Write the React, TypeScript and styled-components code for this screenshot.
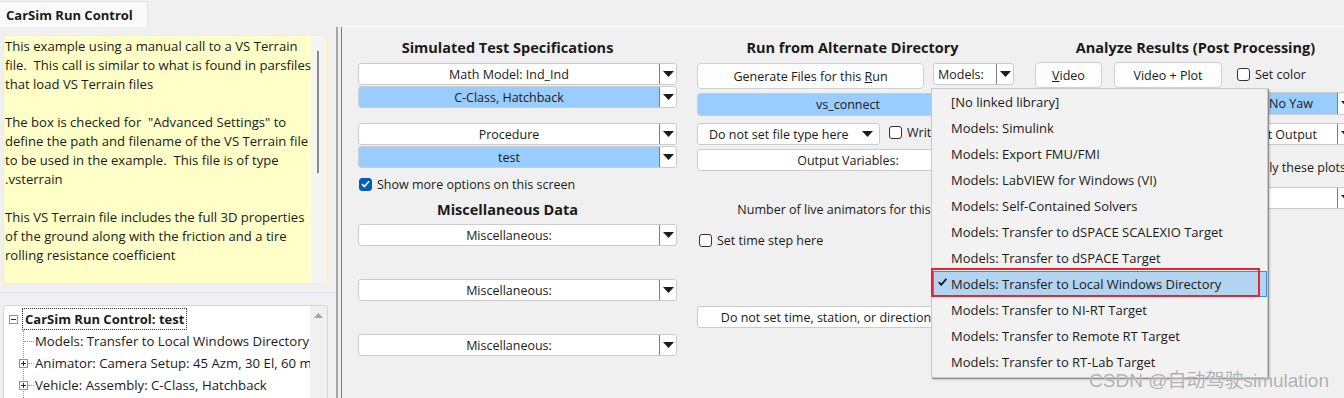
import React from 'react'
import styled, { createGlobalStyle } from 'styled-components'

const GlobalStyle = createGlobalStyle`
  html, body {
    margin: 0;
    padding: 0;
  }
  body {
    font-family: "Open Sans", "Noto Sans", sans-serif;
    background: #f0f0f0;
    color: #1a1a1a;
  }
  * {
    box-sizing: border-box;
  }
`

const Window = styled.div`
  position: relative;
  width: 1344px;
  height: 398px;
  overflow: hidden;
  display: flex;
  flex-direction: column;
  background: #f0f0f0;
  font-size: 12.5px;
`

const TabBar = styled.div`
  height: 27px;
  display: flex;
  align-items: flex-end;
  flex-shrink: 0;
`

const Tab = styled.div`
  width: 148px;
  height: 26px;
  padding-left: 6px;
  background: #f9f9f9;
  border: 1px solid #e2e2e2;
  border-left: none;
  border-bottom: none;
  font-weight: 700;
  font-size: 13px;
  line-height: 26px;
`

const Body = styled.div`
  flex: 1;
  display: flex;
  min-height: 0;
`

const LeftPane = styled.div`
  width: 336px;
  flex-shrink: 0;
  display: flex;
  flex-direction: column;
  padding: 8px 0 0 3px;
  min-height: 0;
`

const NotesBox = styled.div`
  width: 324px;
  height: 249px;
  flex-shrink: 0;
  display: flex;
  background: #ffffc8;
  border: 1px solid #f4efb6;
`

const NotesText = styled.div`
  flex: 1;
  padding: 1px 0 0 1px;
  white-space: pre;
  overflow: hidden;
  line-height: 19px;
  font-size: 13.1px;
`

const NotesScroll = styled.div`
  width: 15px;
  flex-shrink: 0;
  padding: 15px 0 0 6px;
  background: #f4f4f4;
`

const ScrollThumb = styled.div`
  width: 2px;
  height: 122px;
  background: #8a8a8a;
`

const PaneRule = styled.div`
  height: 1px;
  flex-shrink: 0;
  margin: 8px 0 0 -3px;
  background: #d5e5f4;
`

const TreeBox = styled.div`
  flex: 1;
  min-height: 0;
  width: 325px;
  margin-top: 12px;
  display: flex;
  background: #fff;
  border: 1px solid #c3dbf1;
  border-bottom: none;
  border-radius: 3px 3px 0 0;
  overflow: hidden;
`

const TreeContent = styled.div`
  flex: 1;
  min-width: 0;
  padding-top: 2px;
  overflow: hidden;
  font-size: 13.2px;
`

const TreeRow = styled.div<{ $root?: boolean }>`
  height: 22px;
  display: flex;
  align-items: center;
  white-space: nowrap;
  padding-left: ${(p) => (p.$root ? 5 : 0)}px;
`

const FocusLabel = styled.span`
  flex-shrink: 0;
  margin-left: 4px;
  padding: 0 2px;
  height: 22px;
  line-height: 20px;
  border: 1px dotted #333;
  font-weight: 700;
  font-size: 13px;
`

const TreeChildren = styled.div`
  margin-left: 19px;
  border-left: 1px dotted #9a9a9a;
  padding-bottom: 40px;
`

const Connector = styled.span<{ $w: number }>`
  flex-shrink: 0;
  width: ${(p) => p.$w}px;
  border-top: 1px dotted #9a9a9a;
`

const ExpanderSvg = styled.svg<{ $shift?: number }>`
  flex-shrink: 0;
  margin-left: ${(p) => p.$shift ?? 0}px;
`

const TreeText = styled.span`
  flex-shrink: 0;
  padding-left: 1px;
`

const TreeScroll = styled.div`
  width: 17px;
  flex-shrink: 0;
  display: flex;
  justify-content: center;
  align-items: flex-start;
  padding-top: 7px;
  background: #f0f0f0;
`

const Splitter = styled.div`
  width: 6px;
  flex-shrink: 0;
  border-left: 2px solid #a8a8a8;
  border-right: 1px solid #7c7c7c;
  background: #f0f0f0;
`

const Main = styled.div`
  flex: 1;
  min-width: 0;
  display: grid;
  grid-template-columns: repeat(3, 319px);
  column-gap: 20px;
  align-items: start;
  padding: 12px 0 0 16px;
  border-top: 1px solid #fbfbfb;
  margin-top: -1px;
`

const Column = styled.div`
  display: flex;
  flex-direction: column;
`

const Heading = styled.div<{ $top?: number; $shift?: number }>`
  height: 18px;
  margin-top: ${(p) => p.$top ?? 0}px;
  margin-left: ${(p) => (p.$shift ?? 0) * 2}px;
  line-height: 18px;
  text-align: center;
  font-weight: 700;
  font-size: 14.5px;
  white-space: nowrap;
`

const Combo = styled.div<{ $top?: number; $h?: number; $w?: number }>`
  display: flex;
  flex-shrink: 0;
  width: ${(p) => (p.$w ? `${p.$w}px` : '100%')};
  height: ${(p) => p.$h ?? 22}px;
  margin-top: ${(p) => p.$top ?? 0}px;
  background: #fff;
  border: 1px solid #cccccc;
  border-radius: 3px;
  overflow: hidden;
`

const ComboText = styled.div<{ $selected?: boolean; $left?: boolean }>`
  flex: 1;
  min-width: 0;
  display: flex;
  align-items: center;
  justify-content: ${(p) => (p.$left ? 'flex-start' : 'center')};
  padding-left: ${(p) => (p.$left ? 4 : 0)}px;
  white-space: nowrap;
  overflow: hidden;
  background: ${(p) => (p.$selected ? '#99ccff' : 'transparent')};
`

const ComboArrow = styled.div`
  width: 17px;
  flex-shrink: 0;
  display: flex;
  align-items: center;
  justify-content: center;
  border-left: 1px solid #7e7e7e;
`

const Select = styled.div<{ $w: number }>`
  width: ${(p) => p.$w}px;
  height: 22px;
  flex-shrink: 0;
  display: flex;
  align-items: center;
  justify-content: space-between;
  padding: 0 6px 0 11px;
  background: #fff;
  border: 1px solid #cccccc;
  border-radius: 3px;
  white-space: nowrap;
`

const Button = styled.div<{ $w?: number; $h?: number }>`
  width: ${(p) => (p.$w ? `${p.$w}px` : 'auto')};
  height: ${(p) => p.$h ?? 26}px;
  flex-shrink: 0;
  display: flex;
  align-items: center;
  justify-content: center;
  background: #fdfdfd;
  border: 1px solid #d0d0d0;
  border-radius: 4px;
  white-space: nowrap;
`

const Row = styled.div<{ $top?: number; $gap?: number; $indent?: number }>`
  display: flex;
  align-items: flex-start;
  gap: ${(p) => p.$gap ?? 0}px;
  margin-top: ${(p) => p.$top ?? 0}px;
  margin-left: ${(p) => p.$indent ?? 0}px;
  white-space: nowrap;
`

const CheckRow = styled.label<{ $top?: number; $indent?: number }>`
  height: 18px;
  flex-shrink: 0;
  display: flex;
  align-items: center;
  gap: 5px;
  margin-top: ${(p) => p.$top ?? 0}px;
  margin-left: ${(p) => p.$indent ?? 0}px;
  white-space: nowrap;
`

const Box = styled.span<{ $checked?: boolean }>`
  width: 13px;
  height: 13px;
  flex-shrink: 0;
  display: flex;
  align-items: center;
  justify-content: center;
  border-radius: 3px;
  border: 1px solid ${(p) => (p.$checked ? '#005fb8' : '#333')};
  background: ${(p) => (p.$checked ? '#005fb8' : '#fff')};
`

const Caption = styled.div<{ $top?: number }>`
  height: 18px;
  margin-top: ${(p) => p.$top ?? 0}px;
  display: flex;
  align-items: center;
  justify-content: center;
  white-space: nowrap;
`

const SpinBox = styled.span`
  width: 14px;
  height: 18px;
  margin-left: 4px;
  background: #fff;
  border: 1px solid #cccccc;
`

const Anchor = styled.div`
  position: relative;
`

const Menu = styled.div`
  position: absolute;
  top: 25px;
  left: -2px;
  z-index: 5;
  width: 337px;
  height: 290px;
  padding-bottom: 2px;
  background: #f2f2f2;
  border: 1px solid #c9c9c9;
  box-shadow: 1px 1px 0 #8c8c8c, 2px 2px 2px rgba(0, 0, 0, 0.18);
  font-size: 13px;
`

const MenuItem = styled.div<{ $selected?: boolean }>`
  position: relative;
  height: 26px;
  margin-left: 1px;
  display: flex;
  align-items: center;
  white-space: nowrap;
  border: 1px solid ${(p) => (p.$selected ? '#3b8de0' : 'transparent')};
  background: ${(p) => (p.$selected ? '#b3d4f1' : 'transparent')};
`

const CheckSlot = styled.span`
  width: 17px;
  height: 100%;
  display: flex;
  justify-content: center;
  padding-top: 6px;
`

const Highlight = styled.div`
  position: absolute;
  left: -3px;
  top: -4px;
  width: 329px;
  height: 29px;
  border: 2px solid #e5262b;
`

const Watermark = styled.div`
  position: absolute;
  right: 15px;
  bottom: 6px;
  font-family: "Liberation Sans", "Noto Sans CJK SC", sans-serif;
  font-size: 19px;
  color: rgba(165, 165, 165, 0.9);
  text-shadow: 0 0 1px #ffffff;
  white-space: nowrap;
  pointer-events: none;
  z-index: 10;
`

const notes = `This example using a manual call to a VS Terrain
file.  This call is similar to what is found in parsfiles
that load VS Terrain files

The box is checked for  "Advanced Settings" to
define the path and filename of the VS Terrain file
to be used in the example.  This file is of type
.vsterrain

This VS Terrain file includes the full 3D properties
of the ground along with the friction and a tire
rolling resistance coefficient`

const menuItems = [
  '[No linked library]',
  'Models: Simulink',
  'Models: Export FMU/FMI',
  'Models: LabVIEW for Windows (VI)',
  'Models: Self-Contained Solvers',
  'Models: Transfer to dSPACE SCALEXIO Target',
  'Models: Transfer to dSPACE Target',
  'Models: Transfer to Local Windows Directory',
  'Models: Transfer to NI-RT Target',
  'Models: Transfer to Remote RT Target',
  'Models: Transfer to RT-Lab Target',
]

const treeItems = [
  { label: 'Models: Transfer to Local Windows Directory: vs_connect', expandable: false },
  { label: 'Animator: Camera Setup: 45 Azm, 30 El, 60 m, No Yaw', expandable: true },
  { label: 'Vehicle: Assembly: C-Class, Hatchback', expandable: true },
]

function Expander({ open, shift }: { open?: boolean; shift?: number }) {
  return (
    <ExpanderSvg width="9" height="9" viewBox="0 0 9 9" $shift={shift}>
      <rect x="0.5" y="0.5" width="8" height="8" fill="#fff" stroke="#919191" />
      <path d="M2 4.5H7" stroke="#2a2a2a" />
      {!open && <path d="M4.5 2V7" stroke="#2a2a2a" />}
    </ExpanderSvg>
  )
}

function Arrow() {
  return (
    <svg width="11" height="6" viewBox="0 0 11 6">
      <path d="M0 0H11L5.5 6Z" fill="#1c1c1c" />
    </svg>
  )
}

function Check({ checked, children, top, indent }: { checked?: boolean; children?: React.ReactNode; top?: number; indent?: number }) {
  return (
    <CheckRow $top={top} $indent={indent}>
      <Box $checked={checked}>
        {checked && (
          <svg width="9" height="8" viewBox="0 0 9 8">
            <path d="M1 4.2L3.4 6.5L8 1.3" fill="none" stroke="#fff" strokeWidth="1.6" />
          </svg>
        )}
      </Box>
      {children}
    </CheckRow>
  )
}

function DropDown({ text, selected, top, h, w, left }: { text: React.ReactNode; selected?: boolean; top?: number; h?: number; w?: number; left?: boolean }) {
  return (
    <Combo $top={top} $h={h} $w={w}>
      <ComboText $selected={selected} $left={left}>{text}</ComboText>
      <ComboArrow><Arrow /></ComboArrow>
    </Combo>
  )
}

export default function App() {
  return (
    <>
      <GlobalStyle />
      <Window>
        <TabBar>
          <Tab>CarSim Run Control</Tab>
        </TabBar>
        <Body>
          <LeftPane>
            <NotesBox>
              <NotesText>{notes}</NotesText>
              <NotesScroll><ScrollThumb /></NotesScroll>
            </NotesBox>
            <PaneRule />
            <TreeBox>
              <TreeContent>
                <TreeRow $root>
                  <Expander open />
                  <FocusLabel>CarSim Run Control: test</FocusLabel>
                </TreeRow>
                <TreeChildren>
                  {treeItems.map((item) => (
                    <TreeRow key={item.label}>
                      {item.expandable ? (
                        <>
                          <Expander shift={-5} />
                          <Connector $w={6} />
                        </>
                      ) : (
                        <Connector $w={10} />
                      )}
                      <TreeText>{item.label}</TreeText>
                    </TreeRow>
                  ))}
                </TreeChildren>
              </TreeContent>
              <TreeScroll>
                <svg width="9" height="5" viewBox="0 0 9 5">
                  <path d="M0 5L4.5 0L9 5Z" fill="#a3a3a3" />
                </svg>
              </TreeScroll>
            </TreeBox>
          </LeftPane>
          <Splitter />
          <Main>
            <Column>
              <Heading $shift={-10}>Simulated Test Specifications</Heading>
              <DropDown top={6} text="Math Model: Ind_Ind" />
              <DropDown top={1} selected text="C-Class, Hatchback" />
              <DropDown top={15} text="Procedure" />
              <DropDown top={1} selected text="test" />
              <Check top={7} indent={1} checked>Show more options on this screen</Check>
              <Heading $top={8} $shift={-10}>Miscellaneous Data</Heading>
              <DropDown top={5} text="Miscellaneous:" />
              <DropDown top={33} text="Miscellaneous:" />
              <DropDown top={33} text="Miscellaneous:" />
            </Column>

            <Column>
              <Heading $shift={-4}>Run from Alternate Directory</Heading>
              <Row $top={6} $gap={9}>
                <Button $w={227}>Generate Files for this&nbsp;<u>R</u>un</Button>
                <Anchor>
                  <DropDown w={81} left text="Models:" />
                  <Menu>
                    {menuItems.map((item, i) => {
                      const selected = i === 7
                      return (
                        <MenuItem key={item} $selected={selected}>
                          <CheckSlot>
                            {selected && (
                              <svg width="9" height="8" viewBox="0 0 9 8">
                                <path d="M0.8 4.2L3.2 6.8L8.4 0.8" fill="none" stroke="#111" strokeWidth="1.7" />
                              </svg>
                            )}
                          </CheckSlot>
                          {item}
                          {selected && <Highlight />}
                        </MenuItem>
                      )
                    })}
                  </Menu>
                </Anchor>
              </Row>
              <DropDown top={4} h={23} selected text="vs_connect" />
              <Row $top={7} $gap={9}>
                <Select $w={183}>
                  Do not set file type here
                  <Arrow />
                </Select>
                <Check>Write all output variables</Check>
              </Row>
              <DropDown top={4} text="Output Variables:" />
              <Caption $top={29}>
                Number of live animators for this run:
                <SpinBox />
              </Caption>
              <Check top={13} indent={2}>Set time step here</Check>
              <DropDown top={57} text="Do not set time, station, or direction to stop" />
            </Column>

            <Column>
              <Heading>Analyze Results (Post Processing)</Heading>
              <Row $top={5} $gap={12} $indent={-1}>
                <Button $w={67}><u>V</u>ideo</Button>
                <Button $w={108}>Video + Plot</Button>
                <Check top={3} indent={3}>Set color</Check>
              </Row>
              <DropDown top={4} h={23} selected text="Camera Setup: 45 Azm, 30 El, 60 m, No Yaw" />
              <DropDown top={8} text="Plots: Vehicle Motion and the Default Output" />
              <Check top={13} indent={192}>Apply these plots to all runs</Check>
              <DropDown top={11} text="" />
            </Column>
          </Main>
        </Body>
        <Watermark>CSDN @自动驾驶simulation</Watermark>
      </Window>
    </>
  )
}
